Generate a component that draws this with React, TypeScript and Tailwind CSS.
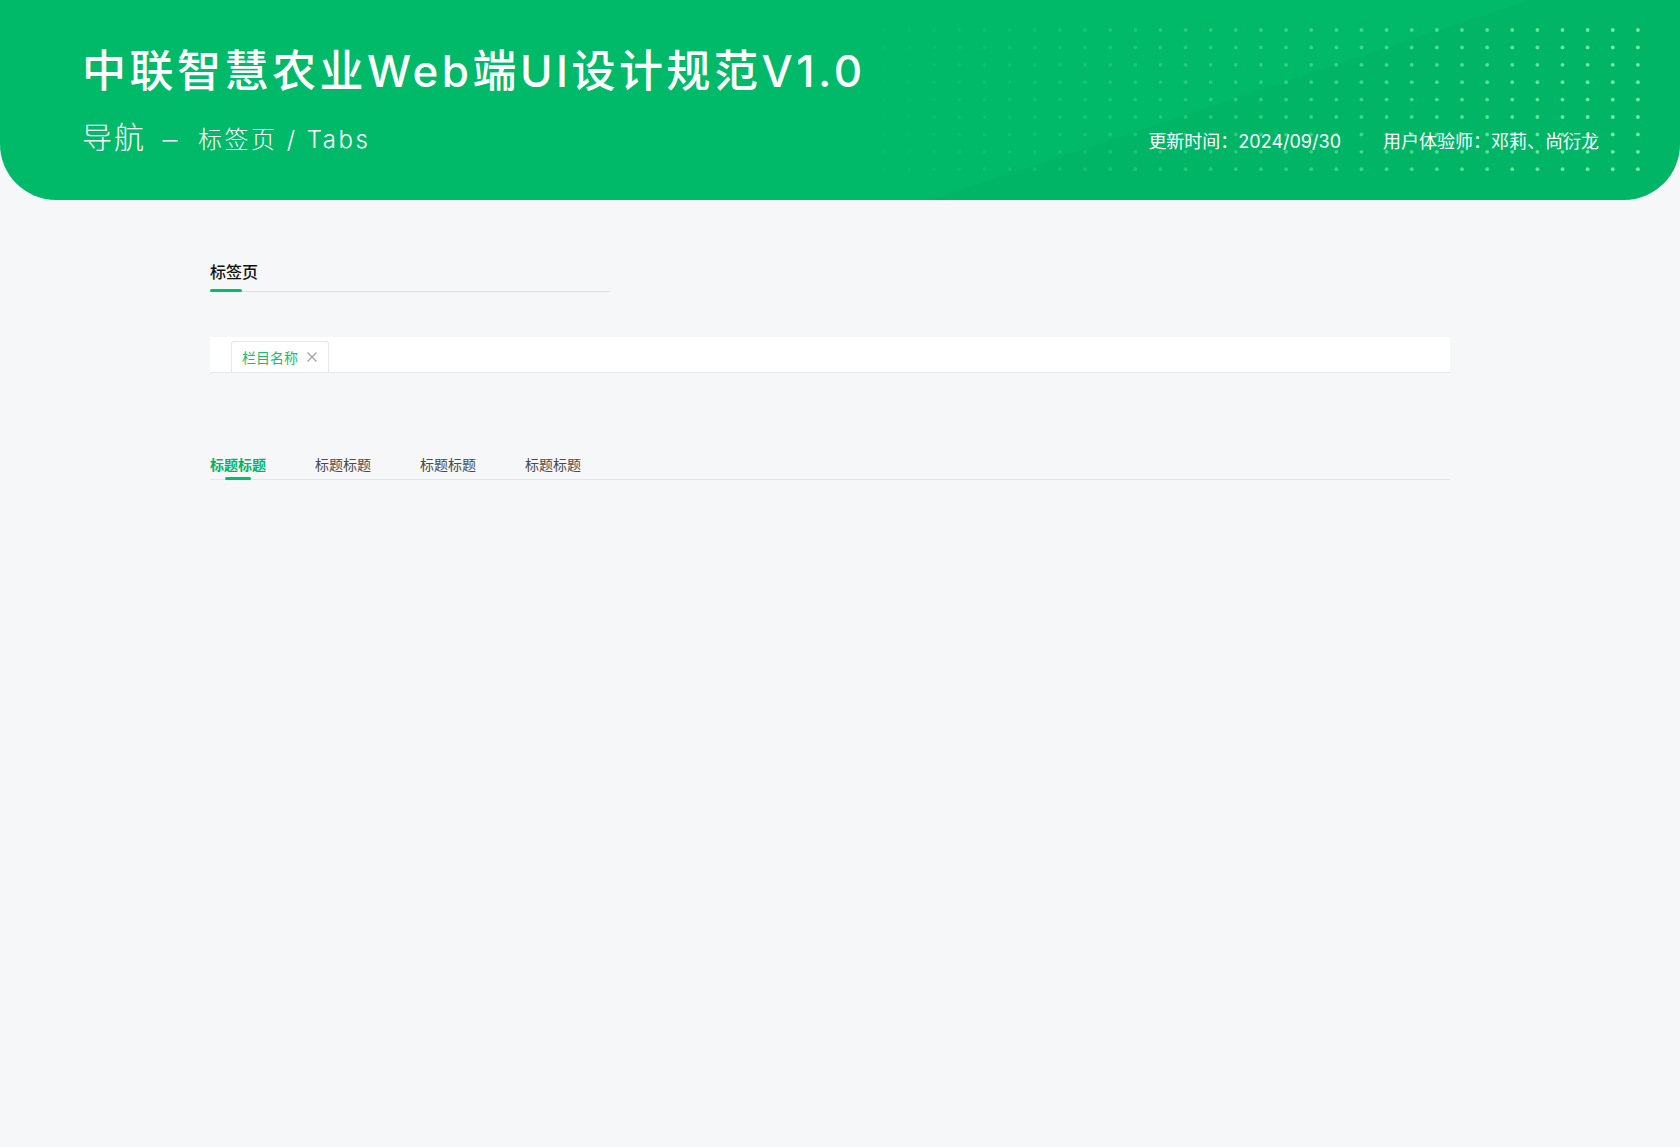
import React from 'react';

const cols = Array.from({ length: 31 }, (_, i) => i);
const rows = Array.from({ length: 9 }, (_, i) => i);

const HeaderDecor: React.FC = () => (
  <svg className="absolute inset-0 w-full h-full pointer-events-none" viewBox="0 0 1680 200" preserveAspectRatio="none">
    <polygon points="930,200 1680,-50 1680,200" fill="#009a55" fillOpacity="0.12" />
    {rows.map((r) =>
      cols.map((c) => (
        <circle
          key={`${r}-${c}`}
          cx={884 + c * 25.13}
          cy={30 + r * 17.4}
          r={1.9}
          fill="#7af0a2"
          fillOpacity={Math.min(0.95, 0.04 + Math.pow(c / 30, 1.4) * 0.95)}
        />
      ))
    )}
  </svg>
);

const tabs = ['标题标题', '标题标题', '标题标题', '标题标题'];

const App: React.FC = () => {
  return (
    <div className="min-h-screen w-full bg-[#f6f7f9] font-['Inter','Noto_Sans_CJK_SC',sans-serif]">
      {/* banner */}
      <header className="relative h-[200px] bg-[#00ba69] rounded-b-[56px] overflow-hidden text-white">
        <HeaderDecor />
        <div className="relative pl-[82px] pr-[81px] pt-[41px]">
          <h1 className="text-[44px] leading-[60px] font-medium tracking-[3.5px]">
            中联智慧农业Web端UI设计规范V1.0
          </h1>
          <div className="mt-[16px] flex items-baseline justify-between">
            <div className="flex items-baseline font-light leading-[40px]">
              <span className="text-[30px] tracking-[2px]">导航</span>
              <span className="ml-[18px] text-[24px] scale-x-125">–</span>
              <span className="ml-[22px] text-[24px] tracking-[2.5px]">标签页 / Tabs</span>
            </div>
            <div className="flex items-baseline gap-[42px] text-[18px]">
              <span>更新时间：2024/09/30</span>
              <span>用户体验师：邓莉、尚衍龙</span>
            </div>
          </div>
        </div>
      </header>

      <main className="px-[210px] w-[1660px] max-w-full">
        {/* section heading */}
        <div className="mt-[60px] w-[400px] relative border-b border-[#dcdfe6] pb-[7px]">
          <h2 className="text-[16px] leading-[24px] font-medium text-[#111]">标签页</h2>
          <div className="absolute left-0 bottom-[-1px] w-[32px] h-[3px] rounded-full bg-[#00c06b]" />
        </div>

        {/* card tabs */}
        <div className="mt-[45px] w-[1240px] h-[36px] bg-white border-b border-[#e8e8ea] flex items-end pl-[21px]">
          <div className="h-[31px] flex items-center gap-[9px] pl-[10px] pr-[11px] border border-b-0 border-[#e4e7ed] rounded-t-[3px] bg-white">
            <span className="text-[14px] text-[#11c070]">栏目名称</span>
            <svg width="10" height="10" viewBox="0 0 10 10" className="text-[#a0a0a0]">
              <path d="M0.5 0.5 L9.5 9.5 M9.5 0.5 L0.5 9.5" stroke="currentColor" strokeWidth="1.2" />
            </svg>
          </div>
        </div>

        {/* line tabs */}
        <div className="mt-[79px] w-[1240px] flex gap-[49px] border-b border-[#e4e4ef]">
          {tabs.map((t, i) => (
            <div key={i} className="relative pb-[3px]">
              <span
                className={
                  i === 0
                    ? 'text-[14px] leading-[22px] font-semibold text-[#00b464]'
                    : 'text-[14px] leading-[22px] text-[#4a4a4a]'
                }
              >
                {t}
              </span>
              {i === 0 && (
                <div className="absolute bottom-[-1px] left-1/2 -translate-x-1/2 w-[26px] h-[3px] rounded-full bg-[#00c06b]" />
              )}
            </div>
          ))}
        </div>
      </main>
    </div>
  );
};

export default App;
